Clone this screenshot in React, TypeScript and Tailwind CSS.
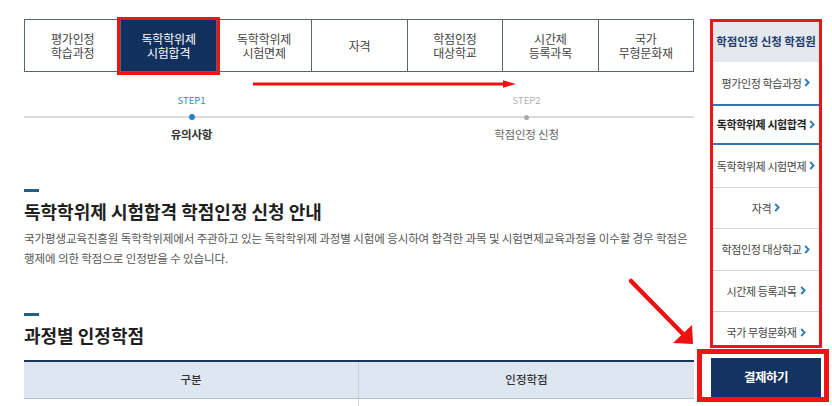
import React from "react";

const tabs: string[][] = [
  ["평가인정", "학습과정"],
  ["독학학위제", "시험합격"],
  ["독학학위제", "시험면제"],
  ["자격"],
  ["학점인정", "대상학교"],
  ["시간제", "등록과목"],
  ["국가", "무형문화재"],
];

const sideMenu = [
  "평가인정 학습과정",
  "독학학위제 시험합격",
  "독학학위제 시험면제",
  "자격",
  "학점인정 대상학교",
  "시간제 등록과목",
  "국가 무형문화재",
];

function Chevron() {
  return (
    <svg width="6" height="9" viewBox="0 0 6 9" className="shrink-0">
      <path d="M1.2 1 L4.6 4.5 L1.2 8" fill="none" stroke="#2f7dbd" strokeWidth="1.9" />
    </svg>
  );
}

function SectionTitle({ children }: { children: React.ReactNode }) {
  return (
    <div className="flex flex-col">
      <div className="w-[15px] h-[3px] bg-[#1f5f8c]" />
      <h2 className="mt-[7px] text-[18px] leading-[24px] font-bold text-[#1e1e1e]">
        {children}
      </h2>
    </div>
  );
}

export default function App() {
  return (
    <div className="relative w-[832px] h-[406px] overflow-hidden bg-white flex items-start pl-[24px] font-['Noto_Sans_CJK_KR','Noto_Sans_CJK_SC',sans-serif]">
      {/* main column */}
      <div className="w-[670px] shrink-0 flex flex-col pt-[19px]">
        {/* category tabs */}
        <div className="grid grid-cols-7 h-[53px] shrink-0 border border-[#56647a]">
          {tabs.map((t, i) => {
            const active = i === 1;
            return (
              <div
                key={i}
                className={
                  "relative flex flex-col items-center justify-center text-[12px] leading-[14px] tracking-[-0.2px] " +
                  (i > 0 ? "border-l border-[#56647a] " : "") +
                  (active ? "bg-[#12305c] text-white" : "text-[#444]")
                }
              >
                {t.map((line) => (
                  <span key={line}>{line}</span>
                ))}
                {active && (
                  <div className="absolute -left-[4px] -right-[4px] -top-[3px] -bottom-[4px] border-[3px] border-[#ee1515] pointer-events-none" />
                )}
              </div>
            );
          })}
        </div>

        {/* steps */}
        <div className="mt-[22px] grid grid-cols-2">
          <div className="flex justify-center text-[9.5px] leading-[12px] text-[#2f8ac2]">STEP1</div>
          <div className="flex justify-center text-[9.5px] leading-[12px] text-[#b0b0b0]">STEP2</div>
          <div className="mt-[8px] h-[6px] flex items-center">
            <div className="flex-1 h-[1.5px] bg-[#dcdcdc]" />
            <div className="w-[6px] h-[6px] rounded-full bg-[#2383c2]" />
            <div className="flex-1 h-[1.5px] bg-[#dcdcdc]" />
          </div>
          <div className="mt-[8px] h-[6px] flex items-center">
            <div className="flex-1 h-[1.5px] bg-[#dcdcdc]" />
            <div className="w-[5px] h-[5px] rounded-full bg-[#a8a8a8]" />
            <div className="flex-1 h-[1.5px] bg-[#dcdcdc]" />
          </div>
          <div className="mt-[6px] flex justify-center text-[11.5px] leading-[16px] font-bold tracking-[-0.2px] text-[#333]">
            유의사항
          </div>
          <div className="mt-[6px] flex justify-center text-[11.5px] leading-[16px] tracking-[-0.2px] text-[#666]">
            학점인정 신청
          </div>
        </div>

        {/* guide */}
        <div className="mt-[47px]">
          <SectionTitle>독학학위제 시험합격 학점인정 신청 안내</SectionTitle>
          <p className="mt-[5px] text-[11.5px] leading-[20px] tracking-[-0.1px] text-[#555] whitespace-nowrap">
            국가평생교육진흥원 독학학위제에서 주관하고 있는 독학학위제 과정별 시험에 응시하여 합격한 과목 및 시험면제교육과정을 이수할 경우 학점은
            <br />
            행제에 의한 학점으로 인정받을 수 있습니다.
          </p>
        </div>

        {/* credits per course */}
        <div className="mt-[45px]">
          <SectionTitle>과정별 인정학점</SectionTitle>
        </div>
        <div className="mt-[13px] border-t-2 border-[#1d355a]">
          <div className="grid grid-cols-2 h-[37px] bg-[#dde6f1] border-b border-[#b9bfc7] text-[11.5px] font-medium text-[#333]">
            <div className="flex items-center justify-center border-r border-[#c8cdd4]">구분</div>
            <div className="flex items-center justify-center">인정학점</div>
          </div>
          <div className="grid grid-cols-2 h-[20px]">
            <div className="border-r border-[#d5d9de]" />
            <div />
          </div>
        </div>
      </div>

      {/* side column */}
      <div className="ml-[16px] w-[112px] shrink-0 flex flex-col pt-[19px]">
        <nav className="h-[329px] shrink-0 overflow-hidden border-[3px] border-[#ee1515] flex flex-col">
          <div className="h-[40px] shrink-0 flex items-center justify-center bg-[#e4e9f0] text-[11.5px] font-bold tracking-[-0.1px] text-[#22406c] whitespace-nowrap">
            학점인정 신청 학점원
          </div>
          {sideMenu.map((label, i) => {
            const active = i === 1;
            let border = "border-t border-[#d2d5da]";
            if (i === 0 || i === 2) border = "";
            if (active) border = "border-y-2 border-[#2f78b4]";
            return (
              <div
                key={label}
                className={
                  "h-[41.5px] shrink-0 flex items-center justify-center gap-[3px] text-[11px] tracking-[-0.4px] whitespace-nowrap " +
                  border +
                  (active ? " font-bold text-[#222]" : " text-[#444]")
                }
              >
                <span>{label}</span>
                <Chevron />
              </div>
            );
          })}
        </nav>
        <div className="mt-[1px] -ml-[13px] -mr-[7px] border-[5px] border-[#ee1515] pl-[9px] pr-[3px] pt-[4px]">
          <button className="w-full h-[39px] bg-[#133462] text-white text-[12.5px] font-bold tracking-[-0.5px]">
            결제하기
          </button>
        </div>
      </div>

      {/* red annotation arrows */}
      <svg className="absolute inset-0 pointer-events-none" width="832" height="406" viewBox="0 0 832 406">
        <line x1="253" y1="84" x2="504" y2="84" stroke="#ee1111" strokeWidth="2.8" />
        <polygon points="503,80.3 516,84 503,87.7" fill="#ee1111" />
        <line x1="631" y1="281" x2="683" y2="334" stroke="#ee1111" strokeWidth="4.5" strokeLinecap="round" />
        <polygon points="693,344 673,343 692,325" fill="#ee1111" />
      </svg>
    </div>
  );
}
